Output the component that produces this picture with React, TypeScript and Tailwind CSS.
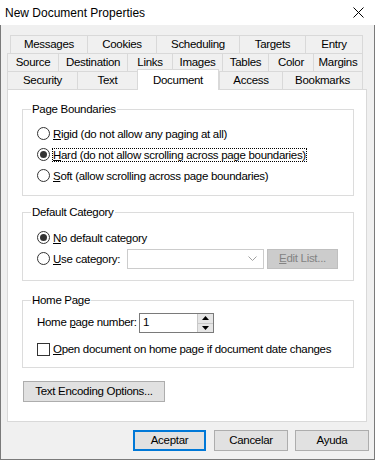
import React from "react";

const font = { fontFamily: '"Liberation Sans", Arial, sans-serif' };

function Tab({ label, w, last }: { label: string; w: number; last?: boolean }) {
  return (
    <div
      className={`h-[18px] flex items-center justify-center border-t border-l border-[#d9d9d9] bg-[#f0f0f0] ${last ? "border-r" : ""}`}
      style={{ width: w }}
    >
      {label}
    </div>
  );
}

function Radio({ checked }: { checked?: boolean }) {
  return (
    <span className="w-[13px] h-[13px] rounded-full border border-[#333333] bg-white flex items-center justify-center shrink-0">
      {checked && <span className="w-[7px] h-[7px] rounded-full bg-[#333333]" />}
    </span>
  );
}

function Group({ title, h, children }: { title: string; h: string; children: React.ReactNode }) {
  return (
    <div className={`relative ml-[14px] w-[332px] border border-[#dcdcdc] ${h}`}>
      <span className="absolute left-[8px] -top-[8px] bg-white px-[1px] leading-[14px]">{title}</span>
      {children}
    </div>
  );
}

function Button({ children, w, primary }: { children: React.ReactNode; w: string; primary?: boolean }) {
  return (
    <div
      className={`h-[21px] flex items-center justify-center bg-[#e1e1e1] ${w} ${primary ? "border-2 border-[#0078d7]" : "border border-[#adadad]"}`}
    >
      {children}
    </div>
  );
}

export default function App() {
  return (
    <div
      className="w-[375px] h-[460px] bg-[#f0f0f0] text-[11.5px] tracking-[-0.3px] text-black flex flex-col"
      style={font}
    >
      {/* title bar */}
      <div className="h-[25px] bg-white flex items-center justify-between pl-[5px] pr-[11px] shrink-0">
        <span className="text-[12px] tracking-normal">New Document Properties</span>
        <svg width="11" height="11" viewBox="0 0 11 11">
          <path d="M0.5 0.5 L10.5 10.5 M10.5 0.5 L0.5 10.5" stroke="#000" strokeWidth="1" />
        </svg>
      </div>

      <div className="flex-1 border-l border-r border-b border-[#7a7a7a] flex flex-col pl-[6px] pt-[10px]">
        {/* tabs */}
        <div className="flex ml-[3px]">
          <Tab label="Messages" w={77} />
          <Tab label="Cookies" w={69} />
          <Tab label="Scheduling" w={83} />
          <Tab label="Targets" w={66} />
          <Tab label="Entry" w={58} last />
        </div>
        <div className="flex">
          <Tab label="Source" w={51} />
          <Tab label="Destination" w={69} />
          <Tab label="Links" w={45} />
          <Tab label="Images" w={50} />
          <Tab label="Tables" w={46} />
          <Tab label="Color" w={45} />
          <Tab label="Margins" w={50} last />
        </div>
        <div className="flex items-start h-[18px]">
          <Tab label="Security" w={70} />
          <Tab label="Text" w={60} />
          <div className="relative z-10 -mt-[2px] h-[21px] w-[82px] bg-white border-t border-l border-r border-[#d9d9d9] flex justify-center pt-[2px]">
            Document
          </div>
          <Tab label="Access" w={63} />
          <Tab label="Bookmarks" w={81} last />
        </div>

        {/* panel */}
        <div className="w-[360px] h-[333px] bg-white border border-[#d9d9d9] flex flex-col">
          <div className="mt-[19px]">
            <Group title="Page Boundaries" h="h-[87px]">
              <div className="pt-[13px] pl-[14px] flex flex-col">
                <div className="h-[21px] flex items-center">
                  <Radio />
                  <span className="ml-[2px] border border-transparent leading-[12px] px-0">
                    <span className="underline">R</span>igid (do not allow any paging at all)
                  </span>
                </div>
                <div className="h-[21px] flex items-center">
                  <Radio checked />
                  <span className="ml-[2px] border border-dotted border-black leading-[12px]">
                    <span className="underline">H</span>ard (do not allow scrolling across page boundaries)
                  </span>
                </div>
                <div className="h-[21px] flex items-center">
                  <Radio />
                  <span className="ml-[2px] border border-transparent leading-[12px]">
                    <span className="underline">S</span>oft (allow scrolling across page boundaries)
                  </span>
                </div>
              </div>
            </Group>
          </div>

          <div className="mt-[16px]">
            <Group title="Default Category" h="h-[69px]">
              <div className="pt-[14px] pl-[14px] flex flex-col">
                <div className="h-[21px] flex items-center">
                  <Radio checked />
                  <span className="ml-[2px] border border-transparent leading-[12px]">
                    <span className="underline">N</span>o default category
                  </span>
                </div>
                <div className="h-[21px] flex items-center">
                  <Radio />
                  <span className="ml-[2px] w-[75px] border border-transparent leading-[12px]">
                    <span className="underline">U</span>se category:
                  </span>
                  <div className="w-[137px] h-[20px] border border-[#cccccc] bg-white flex items-center justify-end pr-[6px]">
                    <svg width="9" height="5" viewBox="0 0 9 5">
                      <path d="M0.5 0.5 L4.5 4.5 L8.5 0.5" fill="none" stroke="#a0a0a0" strokeWidth="1" />
                    </svg>
                  </div>
                  <div className="ml-[3px] w-[71px] h-[20px] bg-[#cccccc] border border-[#bfbfbf] flex items-center justify-center text-[#838383]">
                    <span>
                      <span className="underline">E</span>dit List...
                    </span>
                  </div>
                </div>
              </div>
            </Group>
          </div>

          <div className="mt-[19px]">
            <Group title="Home Page" h="h-[68px]">
              <div className="pt-[12px] pl-[14px] flex flex-col">
                <div className="h-[20px] flex items-center">
                  <span className="w-[102px]">
                    Home <span className="underline">p</span>age number:
                  </span>
                  <div className="w-[75px] h-[20px] border border-[#7a7a7a] flex items-stretch">
                    <span className="flex-1 pl-[3px] flex items-center">1</span>
                    <div className="w-[16px] flex flex-col border-l border-[#c8c8c8] bg-[#e6e6e6]">
                      <div className="flex-1 flex items-center justify-center border-b border-[#c8c8c8]">
                        <svg width="7" height="4" viewBox="0 0 7 4">
                          <path d="M3.5 0 L7 4 L0 4 Z" fill="#000" />
                        </svg>
                      </div>
                      <div className="flex-1 flex items-center justify-center">
                        <svg width="7" height="4" viewBox="0 0 7 4">
                          <path d="M0 0 L7 0 L3.5 4 Z" fill="#000" />
                        </svg>
                      </div>
                    </div>
                  </div>
                </div>
                <div className="h-[20px] mt-[6px] flex items-center">
                  <span className="w-[13px] h-[13px] border border-[#333333] bg-white shrink-0" />
                  <span className="ml-[2px] border border-transparent leading-[12px]">
                    <span className="underline">O</span>pen document on home page if document date changes
                  </span>
                </div>
              </div>
            </Group>
          </div>

          <div className="mt-[13px] ml-[15px]">
            <Button w="w-[142px]">Text Encoding Options...</Button>
          </div>
        </div>

        {/* bottom buttons */}
        <div className="mt-[8px] flex justify-end pr-[5px]">
          <Button w="w-[73px]" primary>
            Aceptar
          </Button>
          <div className="ml-[8px]">
            <Button w="w-[74px]">Cancelar</Button>
          </div>
          <div className="ml-[7px]">
            <Button w="w-[74px]">Ayuda</Button>
          </div>
        </div>
      </div>
    </div>
  );
}
